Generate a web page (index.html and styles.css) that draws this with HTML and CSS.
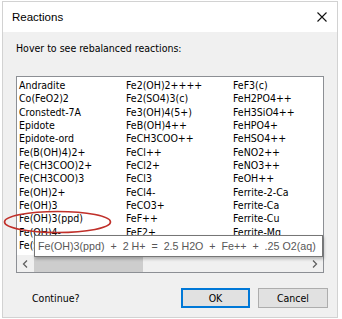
FILE: index.html
```html
<!DOCTYPE html>
<html lang="en">
<head>
    <meta charset="UTF-8">
    <meta name="viewport" content="width=device-width, initial-scale=1.0">
    <title>Reactions</title>
    <link rel="stylesheet" href="styles.css">
</head>
<body>

    <div class="dialog">
        <div class="titlebar">
            <span class="title">Reactions</span>
            <svg class="close" width="10" height="10" viewBox="0 0 10 10">
                <path d="M0.5 0.5 L9.5 9.5 M9.5 0.5 L0.5 9.5" stroke="#111" stroke-width="1.1" fill="none"/>
            </svg>
        </div>

        <div class="content">
            <p class="hint">Hover to see rebalanced reactions:</p>

            <div class="listbox">
                <ul class="items">
                    <li>Andradite</li>
                    <li>Co(FeO2)2</li>
                    <li>Cronstedt-7A</li>
                    <li>Epidote</li>
                    <li>Epidote-ord</li>
                    <li>Fe(B(OH)4)2+</li>
                    <li>Fe(CH3COO)2+</li>
                    <li>Fe(CH3COO)3</li>
                    <li>Fe(OH)2+</li>
                    <li>Fe(OH)3</li>
                    <li>Fe(OH)3(ppd)</li>
                    <li>Fe(OH)4-</li>
                    <li>Fe(SO4)2-</li>

                    <li>Fe2(OH)2++++</li>
                    <li>Fe2(SO4)3(c)</li>
                    <li>Fe3(OH)4(5+)</li>
                    <li>FeB(OH)4++</li>
                    <li>FeCH3COO++</li>
                    <li>FeCl++</li>
                    <li>FeCl2+</li>
                    <li>FeCl3</li>
                    <li>FeCl4-</li>
                    <li>FeCO3+</li>
                    <li>FeF++</li>
                    <li>FeF2+</li>
                    <li>FeF3</li>

                    <li>FeF3(c)</li>
                    <li>FeH2PO4++</li>
                    <li>FeH3SiO4++</li>
                    <li>FeHPO4+</li>
                    <li>FeHSO4++</li>
                    <li>FeNO2++</li>
                    <li>FeNO3++</li>
                    <li>FeOH++</li>
                    <li>Ferrite-2-Ca</li>
                    <li>Ferrite-Ca</li>
                    <li>Ferrite-Cu</li>
                    <li>Ferrite-Mg</li>
                    <li>Ferrite-Zn</li>
                </ul>

                <div class="hscroll">
                    <span class="arrow">
                        <svg width="7" height="8" viewBox="0 0 7 8"><path d="M5 0.5 L1.5 4 L5 7.5" stroke="#606060" stroke-width="1.3" fill="none"/></svg>
                    </span>
                    <div class="track"><div class="thumb"></div></div>
                    <span class="arrow">
                        <svg width="7" height="8" viewBox="0 0 7 8"><path d="M2 0.5 L5.5 4 L2 7.5" stroke="#606060" stroke-width="1.3" fill="none"/></svg>
                    </span>
                </div>
            </div>

            <div class="footer">
                <span class="question">Continue?</span>
                <button class="btn btn-default">OK</button>
                <button class="btn">Cancel</button>
            </div>
        </div>

        <!-- annotation around the hovered item -->
        <svg class="mark" width="109" height="24" viewBox="0 0 109 24">
            <ellipse cx="54.5" cy="12" rx="53" ry="10.5" stroke="#c0302a" stroke-width="1.6" fill="none"/>
        </svg>

        <div class="tooltip">Fe(OH)3(ppd)  +  2 H+  =  2.5 H2O  +  Fe++  +  .25 O2(aq)</div>
    </div>

</body>
</html>
```

FILE: styles.css
```css
body {
    margin: 0;
    background: #fff;
    font-family: "DejaVu Sans Condensed", "DejaVu Sans", sans-serif;
    font-stretch: condensed;
    font-size: 10.5px;
    color: #000;
}

.dialog {
    position: relative;
    box-sizing: border-box;
    width: 336px;
    height: 317px;
    margin: 1px 0 0 2px;
    border: 1px solid #d2d2d2;
    background: #f0f0f0;
}

.titlebar {
    display: flex;
    align-items: center;
    justify-content: space-between;
    height: 30px;
    padding: 0 10px 0 9px;
    background: #fff;
}

.title {
    font-family: "Liberation Sans", Arial, sans-serif;
    font-size: 11.5px;
    color: #000;
}

.content {
    padding: 10px 13px 0 13px;
}

.hint {
    margin: 0;
    line-height: 13px;
}

.listbox {
    display: flex;
    flex-direction: column;
    box-sizing: border-box;
    height: 197px;
    margin-top: 21px;
    border: 1px solid #8c8f94;
    background: #fff;
}

.items {
    flex: 1;
    display: grid;
    grid-template-rows: repeat(13, 13.35px);
    grid-auto-flow: column;
    grid-auto-columns: 107px;
    margin: 0;
    padding: 2px 0 0 2px;
    list-style: none;
    overflow: hidden;
}

.items li {
    line-height: 13.35px;
    white-space: nowrap;
}

.hscroll {
    display: flex;
    height: 17px;
    background: #f0f0f0;
}

.arrow {
    display: flex;
    align-items: center;
    justify-content: center;
    width: 17px;
}

.track {
    flex: 1;
    display: flex;
}

.thumb {
    width: 109px;
    background: #cdcdcd;
}

.footer {
    display: flex;
    align-items: center;
    gap: 8px;
    margin: 15px -4px 0 0;
}

.question {
    flex: 1;
    padding-left: 16px;
}

.btn {
    box-sizing: border-box;
    height: 20px;
    padding: 0;
    font-family: inherit;
    font-stretch: condensed;
    font-size: 10.5px;
    color: #000;
    background: #e1e1e1;
    border: 1px solid #adadad;
}

.btn-default {
    width: 69px;
    border: 2px solid #0078d7;
}

.btn + .btn {
    width: 70px;
}

.mark {
    position: absolute;
    left: 0;
    top: 208px;
}

.tooltip {
    position: absolute;
    left: 31px;
    top: 233px;
    box-sizing: border-box;
    width: 289px;
    height: 22px;
    padding: 0 0 0 3px;
    line-height: 20px;
    white-space: pre;
    font-family: "Liberation Sans", Arial, sans-serif;
    font-size: 10.7px;
    color: #575757;
    background: #fff;
    border: 1px solid #767676;
    box-shadow: 1px 2px 3px rgba(0, 0, 0, 0.25);
}
```
